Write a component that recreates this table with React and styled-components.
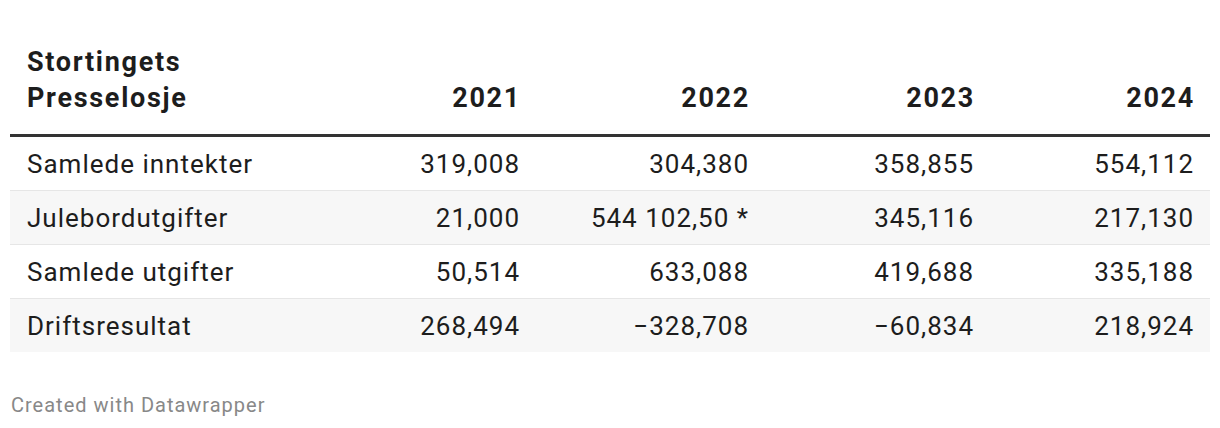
import React from 'react';
import styled, { createGlobalStyle } from 'styled-components';

const GlobalStyle = createGlobalStyle`
  html, body {
    margin: 0;
    padding: 0;
    background: #ffffff;
  }
  body {
    font-family: Roboto, "Liberation Sans", Arial, sans-serif;
    color: #1d1d1d;
  }
`;

const columns = [
  { label: '2021', width: 226 },
  { label: '2022', width: 229 },
  { label: '2023', width: 225 },
  { label: '2024', width: 220 },
];

const rows = [
  { name: 'Samlede inntekter', values: ['319,008', '304,380', '358,855', '554,112'] },
  { name: 'Julebordutgifter', values: ['21,000', '544 102,50 *', '345,116', '217,130'] },
  { name: 'Samlede utgifter', values: ['50,514', '633,088', '419,688', '335,188'] },
  { name: 'Driftsresultat', values: ['268,494', '−328,708', '−60,834', '218,924'] },
];

const App = () => {
  return (
    <>
      <GlobalStyle />
      <Page>
        <Table>
          <colgroup>
            <col style={{ width: 300 }} />
            {columns.map((c) => (
              <col key={c.label} style={{ width: c.width }} />
            ))}
          </colgroup>
          <thead>
            <tr>
              <HeadCell>
                Stortingets
                <br />
                Presselosje
              </HeadCell>
              {columns.map((c) => (
                <HeadCell key={c.label} $numeric>
                  {c.label}
                </HeadCell>
              ))}
            </tr>
          </thead>
          <tbody>
            {rows.map((r, i) => (
              <Row key={r.name} $striped={i % 2 === 1}>
                <Cell>{r.name}</Cell>
                {r.values.map((v, j) => (
                  <Cell key={j} $numeric>
                    {v}
                  </Cell>
                ))}
              </Row>
            ))}
          </tbody>
        </Table>
        <Footer>Created with Datawrapper</Footer>
      </Page>
    </>
  );
};

export default App;

// Styles
const Page = styled.div`
  padding: 44px 10px 0 10px;
`;

const Table = styled.table`
  width: 100%;
  border-collapse: collapse;
  table-layout: fixed;
`;

const HeadCell = styled.th`
  font-size: 27px;
  font-weight: 700;
  line-height: 36px;
  letter-spacing: 1.7px;
  text-align: ${({ $numeric }) => ($numeric ? 'right' : 'left')};
  vertical-align: bottom;
  padding: 0 ${({ $numeric }) => ($numeric ? '15px' : '17px')} 18px 17px;
  border-bottom: 3px solid #333333;
  color: #1d1d1d;
`;

const Row = styled.tr`
  background: ${({ $striped }) => ($striped ? '#f7f7f7' : '#ffffff')};
  border-bottom: 1px solid #e6e6e6;

  &:last-child {
    border-bottom: none;
  }
`;

const Cell = styled.td`
  font-size: 26px;
  line-height: 30px;
  letter-spacing: 1px;
  height: 53px;
  padding: 0 ${({ $numeric }) => ($numeric ? '16px' : '17px')} 0 17px;
  text-align: ${({ $numeric }) => ($numeric ? 'right' : 'left')};
  vertical-align: middle;
  white-space: nowrap;
  color: #1d1d1d;
`;

const Footer = styled.div`
  margin-top: 41px;
  padding-left: 1px;
  font-size: 20px;
  letter-spacing: 1px;
  color: #888888;
`;
